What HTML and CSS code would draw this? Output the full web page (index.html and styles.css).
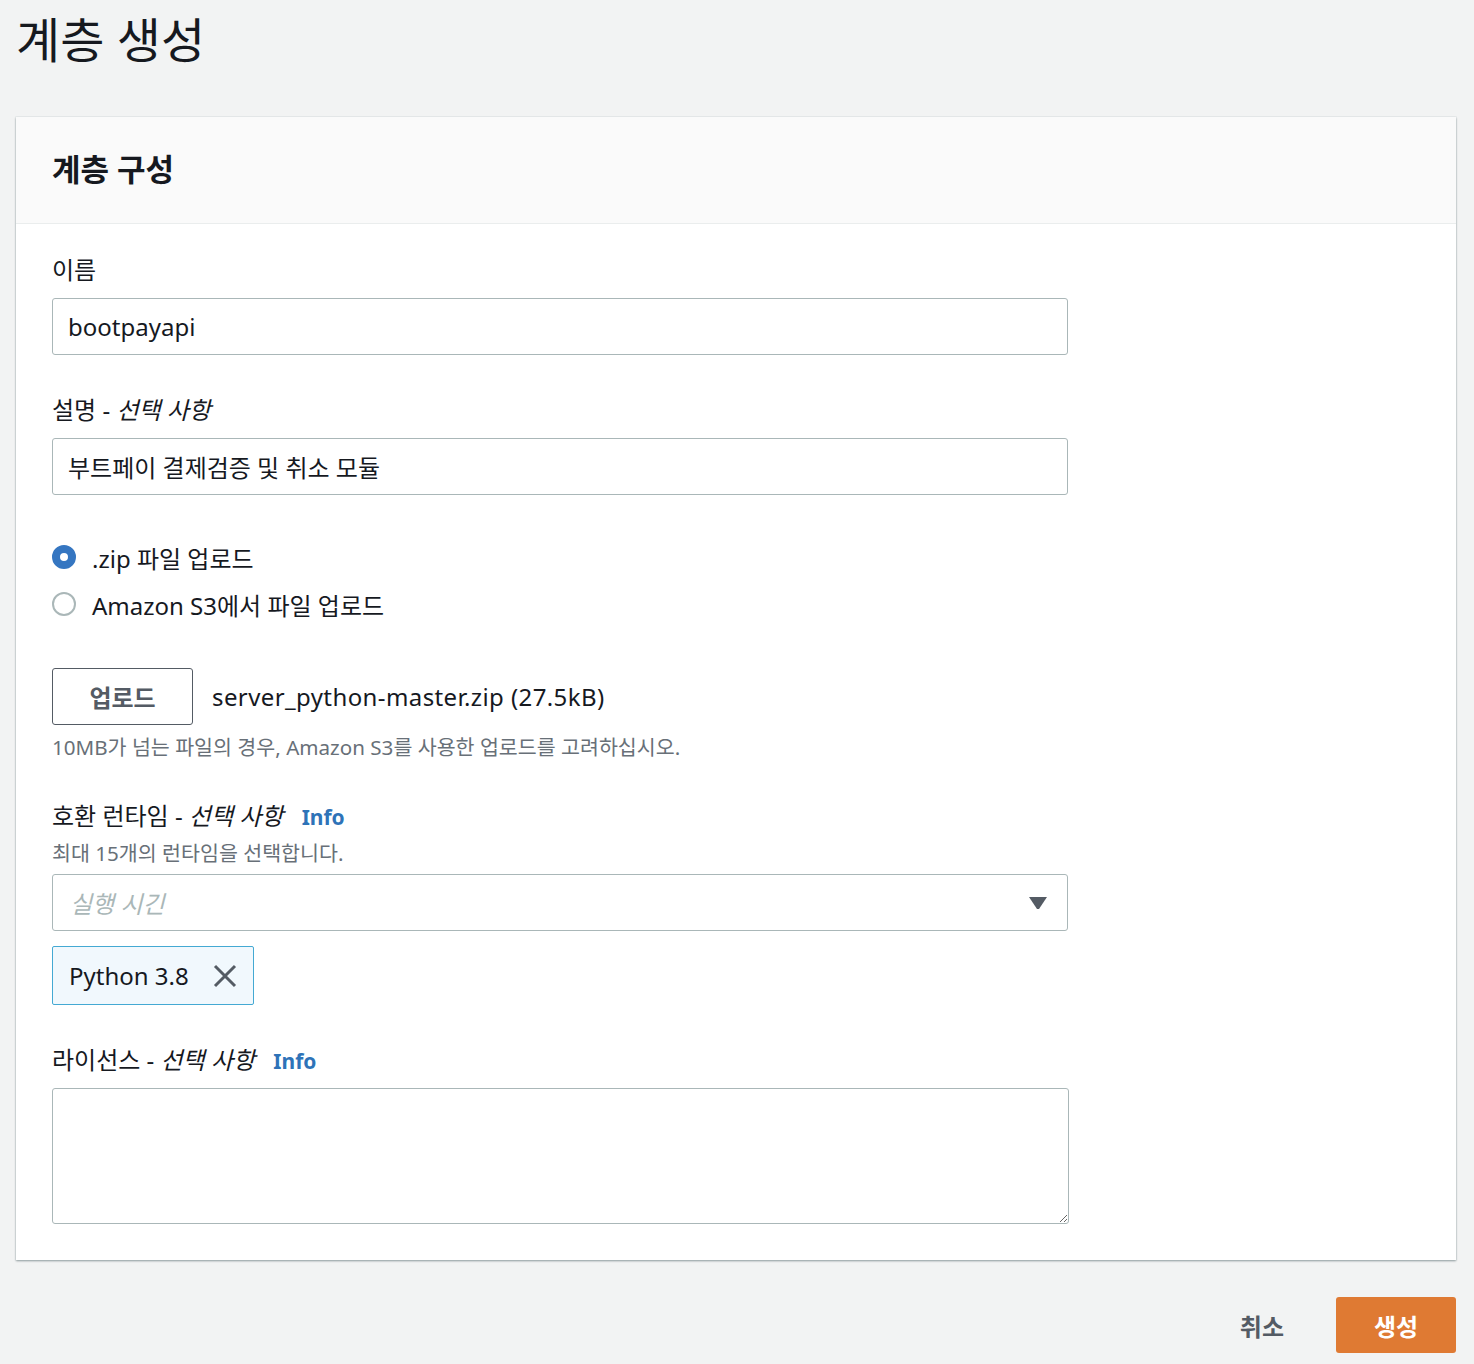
FILE: index.html
```html
<!DOCTYPE html>
<html lang="ko">
<head>
<meta charset="utf-8">
<title>계층 생성</title>
<link rel="stylesheet" href="styles.css">
</head>
<body>
<div class="page">
  <h1 class="title">계층 생성</h1>
  <section class="card">
    <div class="card-header"><h2>계층 구성</h2></div>
    <div class="card-body">
      <div class="field">
        <label class="label">이름</label>
        <input class="input" type="text" value="bootpayapi">
      </div>
      <div class="field field-gap">
        <label class="label">설명 - <i>선택 사항</i></label>
        <input class="input" type="text" value="부트페이 결제검증 및 취소 모듈">
      </div>
      <div class="radios">
        <div class="radio-row"><span class="radio checked"></span><span class="radio-text">.zip 파일 업로드</span></div>
        <div class="radio-row"><span class="radio"></span><span class="radio-text">Amazon S3에서 파일 업로드</span></div>
      </div>
      <div class="upload-row">
        <button class="btn-normal">업로드</button>
        <span class="filename">server_python-master.zip (27.5kB)</span>
      </div>
      <div class="hint">10MB가 넘는 파일의 경우, Amazon S3를 사용한 업로드를 고려하십시오.</div>
      <div class="field runtime">
        <div class="label">호환 런타임 - <i>선택 사항</i> <a class="info">Info</a></div>
        <div class="desc">최대 15개의 런타임을 선택합니다.</div>
        <div class="select">
          <span class="placeholder">실행 시긴</span>
          <svg class="caret" width="18" height="12" viewBox="0 0 18 12"><path d="M0 0 H18 L10 12 H8 Z" fill="#545b64"/></svg>
        </div>
        <div class="token">
          <span>Python 3.8</span>
          <svg class="x" width="24" height="24" viewBox="0 0 24 24"><path d="M2 2 L22 22 M22 2 L2 22" stroke="#545b64" stroke-width="3" fill="none"/></svg>
        </div>
      </div>
      <div class="field license">
        <div class="label">라이선스 - <i>선택 사항</i> <a class="info">Info</a></div>
        <textarea class="textarea"></textarea>
      </div>
    </div>
  </section>
  <div class="actions">
    <button class="btn-link">취소</button>
    <button class="btn-primary">생성</button>
  </div>
</div>
</body>
</html>
```

FILE: styles.css
```css
* { box-sizing: border-box; }
html, body { margin: 0; padding: 0; }
body {
  background: #f2f3f3;
  font-family: "Noto Sans", "Noto Sans CJK KR", sans-serif;
  color: #16191f;
  font-size: 24px;
}
.page { padding: 0 18px 0 16px; }
.title {
  margin: 0;
  padding: 10px 0 0 0;
  height: 117px;
  font-size: 48px;
  font-weight: 400;
  line-height: 60px;
}
.card {
  background: #fff;
  box-shadow: 0 1px 2px 0 rgba(0,28,36,0.4), 0 0 0 1px #eaeded;
}
.card-header {
  background: #fafafa;
  border-bottom: 1px solid #eaeded;
  height: 107px;
  padding: 0 36px;
  display: flex;
  align-items: center;
}
.card-header h2 {
  margin: 0;
  font-size: 31px;
  font-weight: 700;
  line-height: 40px;
  position: relative;
  top: -1px;
}
.card-body {
  padding: 30px 36px 36px 36px;
}
.field { display: flex; flex-direction: column; }
.label {
  display: block;
  line-height: 32px;
  height: 32px;
  font-size: 24px;
  margin-bottom: 12px;
}
.label i { font-style: italic; }
.field-gap { margin-top: 39px; }
.input {
  width: 1016px;
  height: 57px;
  border: 1px solid #aab7b8;
  border-radius: 3px;
  padding: 0 15px;
  font-family: inherit;
  font-size: 24px;
  color: #16191f;
  background: #fff;
}
.radios { margin-top: 46px; display: flex; flex-direction: column; gap: 15px; }
.radio-row { display: flex; align-items: center; height: 32px; }
.radio {
  width: 24px; height: 24px;
  border-radius: 50%;
  border: 2px solid #aab7b8;
  background: #fff;
  flex: none;
}
.radio.checked { border: 8px solid #3576c1; }
.radio-text { margin-left: 16px; }
.upload-row {
  margin-top: 48px;
  display: flex;
  align-items: center;
}
.btn-normal {
  width: 141px;
  height: 57px;
  border: 1px solid #545b64;
  border-radius: 3px;
  background: #fff;
  color: #545b64;
  font-family: inherit;
  font-size: 24px;
  font-weight: 700;
}
.filename { margin-left: 19px; letter-spacing: 0.4px; }
.hint {
  color: #687078;
  font-size: 20.6px;
  line-height: 28px;
  margin-top: 8px;
}
.runtime { margin-top: 39px; }
.runtime .label { margin-bottom: 0; }
.info {
  color: #2e73b8;
  font-weight: 700;
  font-size: 21px;
  margin-left: 12px;
}
.desc {
  color: #687078;
  font-size: 20.6px;
  line-height: 30px;
  margin-top: 6px;
  margin-bottom: 6px;
}
.select {
  width: 1016px;
  height: 57px;
  border: 1px solid #aab7b8;
  border-radius: 3px;
  padding: 0 20px 0 17px;
  display: flex;
  align-items: center;
  justify-content: space-between;
}
.placeholder { color: #aab7b8; font-style: italic; }
.caret { flex: none; }
.token {
  margin-top: 15px;
  width: 202px;
  height: 59px;
  border: 1px solid #44a9d3;
  border-radius: 2px;
  background: #f1f8fd;
  display: flex;
  align-items: center;
  padding: 0 16px;
  justify-content: space-between;
}
.license { margin-top: 39px; }
.license .label { margin-bottom: 12px; }
.textarea {
  width: 1017px;
  height: 136px;
  border: 1px solid #aab7b8;
  border-radius: 3px;
  font-family: inherit;
  font-size: 24px;
  display: block;
}
.actions {
  display: flex;
  justify-content: flex-end;
  align-items: center;
  margin-top: 37px;
  gap: 26px;
}
.btn-link {
  background: none;
  border: none;
  color: #545b64;
  font-family: inherit;
  font-size: 24px;
  font-weight: 700;
  height: 56px;
  padding: 0 26px;
}
.btn-primary {
  width: 120px;
  height: 56px;
  background: #df7a33;
  border: none;
  border-radius: 3px;
  color: #fff;
  font-family: inherit;
  font-size: 24px;
  font-weight: 700;
}
```
